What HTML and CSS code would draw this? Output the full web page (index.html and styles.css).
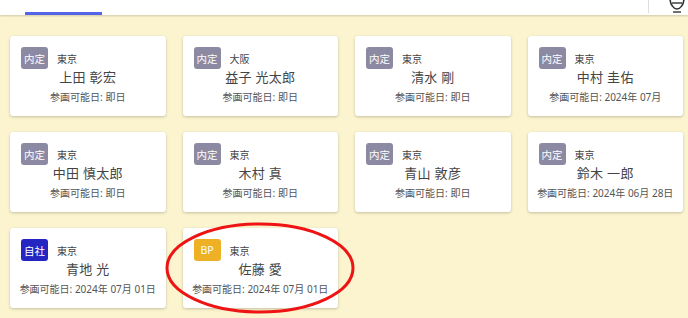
FILE: index.html
```html
<!DOCTYPE html>
<html lang="ja">
<head>
    <meta charset="UTF-8">
    <meta name="viewport" content="width=device-width, initial-scale=1.0">
    <title>要員一覧</title>
    <link rel="stylesheet" href="styles.css">
</head>
<body>
    <header class="topbar">
        <div class="tab-indicator"></div>
        <div class="topbar-right">
            <span class="divider"></span>
            <svg class="user-icon" width="22" height="14" viewBox="0 0 22 14">
                <path d="M4 -2 C4 5 8 9 11 9 C14 9 18 5 18 -2" fill="none" stroke="#333" stroke-width="1.6"/>
                <path d="M6 3 H16" stroke="#333" stroke-width="1.4"/>
                <path d="M7 12 H15" stroke="#333" stroke-width="1.4"/>
            </svg>
        </div>
    </header>

    <main class="grid">
        <div class="card">
            <div class="card-head"><span class="badge badge-naitei">内定</span><span class="place">東京</span></div>
            <div class="name">上田 彰宏</div>
            <div class="date">参画可能日: 即日</div>
        </div>
        <div class="card">
            <div class="card-head"><span class="badge badge-naitei">内定</span><span class="place">大阪</span></div>
            <div class="name">益子 光太郎</div>
            <div class="date">参画可能日: 即日</div>
        </div>
        <div class="card">
            <div class="card-head"><span class="badge badge-naitei">内定</span><span class="place">東京</span></div>
            <div class="name">清水 剛</div>
            <div class="date">参画可能日: 即日</div>
        </div>
        <div class="card">
            <div class="card-head"><span class="badge badge-naitei">内定</span><span class="place">東京</span></div>
            <div class="name">中村 圭佑</div>
            <div class="date">参画可能日: 2024年 07月</div>
        </div>

        <div class="card">
            <div class="card-head"><span class="badge badge-naitei">内定</span><span class="place">東京</span></div>
            <div class="name">中田 慎太郎</div>
            <div class="date">参画可能日: 即日</div>
        </div>
        <div class="card">
            <div class="card-head"><span class="badge badge-naitei">内定</span><span class="place">東京</span></div>
            <div class="name">木村 真</div>
            <div class="date">参画可能日: 即日</div>
        </div>
        <div class="card">
            <div class="card-head"><span class="badge badge-naitei">内定</span><span class="place">東京</span></div>
            <div class="name">青山 敦彦</div>
            <div class="date">参画可能日: 即日</div>
        </div>
        <div class="card">
            <div class="card-head"><span class="badge badge-naitei">内定</span><span class="place">東京</span></div>
            <div class="name">鈴木 一郎</div>
            <div class="date">参画可能日: 2024年 06月 28日</div>
        </div>

        <div class="card">
            <div class="card-head"><span class="badge badge-jisha">自社</span><span class="place">東京</span></div>
            <div class="name">青地 光</div>
            <div class="date">参画可能日: 2024年 07月 01日</div>
        </div>
        <div class="card">
            <div class="card-head"><span class="badge badge-bp">BP</span><span class="place">東京</span></div>
            <div class="name">佐藤 愛</div>
            <div class="date">参画可能日: 2024年 07月 01日</div>
        </div>
    </main>

    <!-- annotation circle -->
    <svg class="annotation" width="200" height="100" viewBox="0 0 200 100">
        <ellipse cx="100" cy="48" rx="93" ry="44" fill="none" stroke="#ee1414" stroke-width="3"/>
    </svg>
</body>
</html>
```

FILE: styles.css
```css
:root {
    --bg-main: #fbf4cf;
    --card-bg: #ffffff;
    --text-primary: #444444;
    --text-secondary: #555555;
    --tab-blue: #5563e6;
    --badge-naitei: #8c89a3;
    --badge-jisha: #2525c2;
    --badge-bp: #eeb024;
}

* {
    box-sizing: border-box;
}

body {
    margin: 0;
    height: 318px;
    overflow: hidden;
    position: relative;
    font-family: 'Noto Sans', 'Noto Sans CJK JP', sans-serif;
    background-color: var(--bg-main);
    color: var(--text-primary);
}

.topbar {
    height: 15px;
    background: #fff;
    display: flex;
    justify-content: space-between;
    align-items: flex-end;
    box-shadow: 0 1px 2px rgba(0, 0, 0, 0.18);
    padding-left: 25px;
}

.tab-indicator {
    width: 77px;
    height: 3px;
    background: var(--tab-blue);
}

.topbar-right {
    display: flex;
    align-items: flex-start;
    align-self: stretch;
}

.divider {
    width: 1px;
    height: 13px;
    background: #ddd;
    margin-right: 17px;
}

.user-icon {
    display: block;
}

.grid {
    display: grid;
    grid-template-columns: repeat(4, 155.5px);
    grid-auto-rows: 80px;
    column-gap: 17px;
    row-gap: 16px;
    padding: 21px 0 0 10px;
}

.card {
    background: var(--card-bg);
    border-radius: 3px;
    box-shadow: 0 1px 3px rgba(0, 0, 0, 0.22);
    padding: 11px 11px 0;
    display: flex;
    flex-direction: column;
    align-items: center;
    white-space: nowrap;
}

.card-head {
    align-self: stretch;
    display: flex;
    align-items: center;
    height: 22px;
}

.badge {
    width: 27px;
    height: 22px;
    border-radius: 3px;
    color: #fff;
    font-size: 10.5px;
    display: flex;
    align-items: center;
    justify-content: center;
    margin-right: 9px;
}

.badge-naitei {
    background: var(--badge-naitei);
}

.badge-jisha {
    background: var(--badge-jisha);
}

.badge-bp {
    background: var(--badge-bp);
}

.place {
    font-size: 10px;
    color: var(--text-primary);
}

.name {
    font-size: 13px;
    line-height: 16px;
    color: var(--text-primary);
    letter-spacing: 0.3px;
}

.date {
    margin-top: 5px;
    font-size: 10px;
    line-height: 14px;
    color: var(--text-secondary);
}

.annotation {
    position: absolute;
    left: 160px;
    top: 220px;
}
```
